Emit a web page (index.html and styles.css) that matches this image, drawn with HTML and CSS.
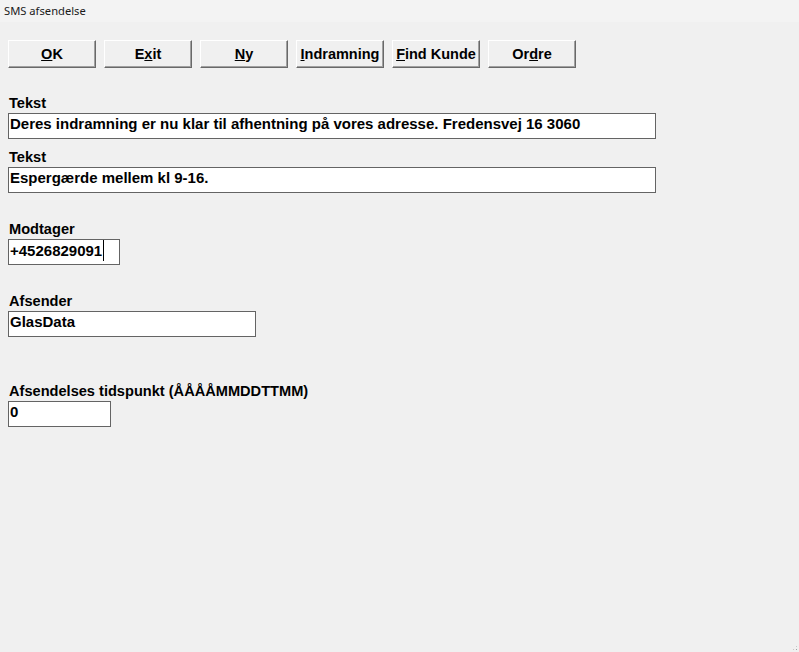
FILE: index.html
```html
<!DOCTYPE html>
<html lang="da">
<head>
<meta charset="UTF-8">
<title>SMS afsendelse</title>
<link rel="stylesheet" href="styles.css">
</head>
<body>

<div class="window">
    <!-- Title bar -->
    <div class="titlebar">SMS afsendelse</div>

    <div class="form">
        <!-- Command buttons -->
        <div class="toolbar">
            <button class="btn"><u>O</u>K</button>
            <button class="btn">E<u>x</u>it</button>
            <button class="btn"><u>N</u>y</button>
            <button class="btn"><u>I</u>ndramning</button>
            <button class="btn"><u>F</u>ind Kunde</button>
            <button class="btn">Or<u>d</u>re</button>
        </div>

        <div class="field first">
            <label>Tekst</label>
            <div class="input wide">Deres indramning er nu klar til afhentning på vores adresse. Fredensvej 16 3060</div>
        </div>

        <div class="field near">
            <label>Tekst</label>
            <div class="input wide">Espergærde mellem kl 9-16.</div>
        </div>

        <div class="field">
            <label>Modtager</label>
            <div class="input phone">+4526829091<span class="caret"></span></div>
        </div>

        <div class="field">
            <label>Afsender</label>
            <div class="input sender">GlasData</div>
        </div>

        <div class="field far">
            <label>Afsendelses tidspunkt (ÅÅÅÅMMDDTTMM)</label>
            <div class="input time">0</div>
        </div>
    </div>

    <div class="grip"></div>
</div>

</body>
</html>
```

FILE: styles.css
```css
* {
    margin: 0;
    padding: 0;
    box-sizing: border-box;
}

body {
    background: #f0f0f0;
    font-family: "Liberation Sans", Arial, sans-serif;
    color: #000;
    overflow: hidden;
}

.window {
    width: 799px;
    height: 652px;
    position: relative;
}

/* Title bar */
.titlebar {
    height: 22px;
    line-height: 22px;
    padding-left: 4px;
    background: #f3f3f3;
    font-family: "Noto Sans", "Liberation Sans", sans-serif;
    font-size: 11.2px;
    color: #1a1a1a;
}

.form {
    padding: 0 8px;
}

/* Buttons */
.toolbar {
    display: flex;
    gap: 8px;
    margin-top: 18px;
}

.btn {
    width: 88px;
    height: 28px;
    background: #f0f0f0;
    border: none;
    border-top: 1px solid #fff;
    border-left: 1px solid #fff;
    border-right: 1px solid #696969;
    border-bottom: 1px solid #696969;
    box-shadow: inset -1px -1px 0 #a0a0a0;
    font-family: "Liberation Sans", Arial, sans-serif;
    font-weight: bold;
    font-size: 14.5px;
    color: #000;
    padding: 0 0 1px 0;
    white-space: nowrap;
}

/* Fields */
.field {
    margin-top: 28px;
}

.field.first {
    margin-top: 27px;
}

.field.near {
    margin-top: 10px;
}

.field.far {
    margin-top: 46px;
}

.field label {
    display: block;
    height: 16px;
    line-height: 16px;
    margin-bottom: 2px;
    padding-left: 1px;
    font-weight: bold;
    font-size: 14.6px;
}

.input {
    height: 26px;
    background: #fff;
    border: 1px solid #646464;
    padding: 0 0 0 1px;
    font-weight: bold;
    font-size: 15px;
    line-height: 20px;
    white-space: nowrap;
    overflow: hidden;
}

.input.wide {
    width: 648px;
}

.input.phone {
    width: 112px;
}

.input.sender {
    width: 248px;
}

.input.time {
    width: 103px;
}

.caret {
    display: inline-block;
    width: 1px;
    height: 21px;
    background: #000;
    vertical-align: -5px;
    margin-left: 1px;
}

/* Resize grip */
.grip {
    position: absolute;
    right: 1px;
    bottom: 1px;
    width: 6px;
    height: 6px;
    background:
        radial-gradient(circle, #a0a0a0 0.8px, transparent 1px) 0 0 / 3px 3px;
    clip-path: polygon(100% 0, 100% 100%, 0 100%);
}
```
